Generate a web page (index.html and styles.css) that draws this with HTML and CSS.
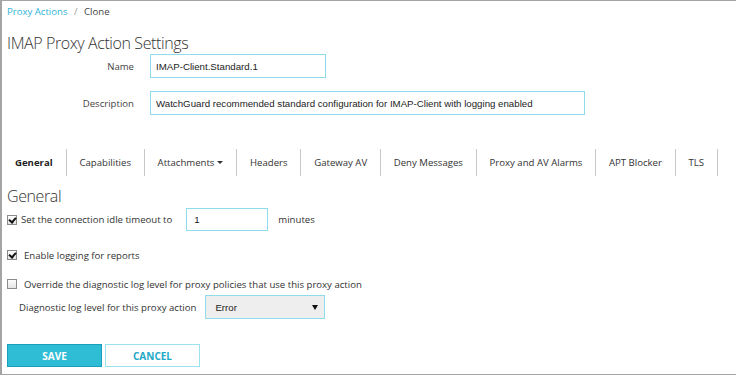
FILE: index.html
```html
<!DOCTYPE html>
<html>
<head>
    <title>IMAP Proxy Action Settings</title>
    <link rel="stylesheet" href="styles.css">
</head>
<body>
    <div class="frame">
        <div class="crumbs">
            <a href="#" class="crumb-link">Proxy Actions</a>
            <span class="crumb-sep">/</span>
            <span class="crumb-current">Clone</span>
        </div>

        <h1 class="page-title">IMAP Proxy Action Settings</h1>

        <div class="field field-name">
            <label class="field-label" for="name">Name</label>
            <input type="text" id="name" class="text-input input-name" value="IMAP-Client.Standard.1">
        </div>
        <div class="field field-desc">
            <label class="field-label" for="desc">Description</label>
            <input type="text" id="desc" class="text-input input-desc" value="WatchGuard recommended standard configuration for IMAP-Client with logging enabled">
        </div>

        <ul class="tabs">
            <li class="tab tab-active">General</li>
            <li class="tab">Capabilities</li>
            <li class="tab">Attachments<span class="caret"></span></li>
            <li class="tab">Headers</li>
            <li class="tab">Gateway AV</li>
            <li class="tab">Deny Messages</li>
            <li class="tab">Proxy and AV Alarms</li>
            <li class="tab">APT Blocker</li>
            <li class="tab">TLS</li>
        </ul>

        <h2 class="section-title">General</h2>

        <div class="row row-timeout">
            <span class="check checked"></span>
            <span class="row-text">Set the connection idle timeout to</span>
            <input type="text" class="text-input input-timeout" value="1">
            <span class="row-text">minutes</span>
        </div>

        <div class="row row-logging">
            <span class="check checked"></span>
            <span class="row-text">Enable logging for reports</span>
        </div>

        <div class="row row-override">
            <span class="check"></span>
            <span class="row-text">Override the diagnostic log level for proxy policies that use this proxy action</span>
        </div>

        <div class="row row-level">
            <span class="row-text">Diagnostic log level for this proxy action</span>
            <div class="select">
                <span>Error</span>
                <svg class="select-arrow" width="6" height="5" viewBox="0 0 6 5"><path d="M0 0h6L3 5z" fill="#111"/></svg>
            </div>
        </div>

        <div class="actions">
            <button class="btn btn-save">SAVE</button>
            <button class="btn btn-cancel">CANCEL</button>
        </div>
    </div>
</body>
</html>
```

FILE: styles.css
```css
body {
    margin: 0;
    background: #fff;
    font-family: "Open Sans", Arial, sans-serif;
    color: #333;
}

.frame {
    width: 733px;
    height: 373px;
    border: 1px solid #a4a4a4;
    border-left-width: 2px;
    padding-left: 5px;
    overflow: hidden;
}

/* breadcrumb */
.crumbs {
    padding-top: 3px;
    height: 16px;
    line-height: 16px;
    font-size: 9.6px;
}

.crumb-link {
    color: #2fb4d4;
    text-decoration: none;
}

.crumb-sep {
    color: #999;
    margin: 0 4px;
}

.crumb-current {
    color: #444;
}

.page-title {
    margin: 12px 0 0;
    font-size: 16px;
    letter-spacing: -0.4px;
    line-height: 22px;
    font-weight: 300;
    color: #333;
}

/* name / description */
.field {
    display: flex;
    align-items: center;
    gap: 16px;
}

.field-desc {
    margin-top: 13px;
}

.field-label {
    width: 127px;
    text-align: right;
    font-size: 9.6px;
    color: #444;
}

.text-input {
    box-sizing: border-box;
    height: 24px;
    border: 1px solid #8fdcec;
    padding: 0 5px;
    font-family: "Liberation Sans", Arial, sans-serif;
    font-size: 9.7px;
    color: #222;
    outline: none;
}

.input-name {
    width: 176px;
}

.input-desc {
    width: 435px;
}

/* tabs */
.tabs {
    list-style: none;
    margin: 34px 0 0 -5px;
    padding: 0;
    display: flex;
    height: 27px;
}

.tab {
    flex: none;
    white-space: nowrap;
    display: flex;
    align-items: center;
    padding: 0 12.8px;
    border-right: 1px solid #c8c8c8;
    font-size: 9.6px;
    color: #333;
}

.tab-active {
    padding-left: 13px;
    padding-right: 13px;
    font-weight: 700;
    color: #222;
}

.caret {
    display: inline-block;
    margin-left: 3px;
    border-left: 3px solid transparent;
    border-right: 3px solid transparent;
    border-top: 3px solid #333;
}

.section-title {
    margin: 9px 0 0;
    font-size: 16px;
    letter-spacing: -0.4px;
    line-height: 22px;
    font-weight: 300;
    color: #333;
}

/* checkbox rows */
.row {
    display: flex;
    align-items: center;
    font-size: 9.6px;
    color: #333;
}

.row-timeout {
    margin-top: 1px;
    gap: 4px;
}

.row-timeout .input-timeout {
    width: 82px;
    height: 23px;
    padding-left: 7px;
    margin: 0 6px 0 10px;
}

.row-logging {
    margin-top: 16px;
    height: 16px;
    gap: 7px;
}

.row-override {
    margin-top: 13px;
    height: 16px;
    gap: 7px;
}

.row-level {
    margin-top: 3px;
    padding-left: 12px;
    gap: 9px;
}

.check {
    box-sizing: border-box;
    width: 10px;
    height: 10px;
    border: 1px solid #8a8a8a;
    background: linear-gradient(#fdfdfd, #e4e4e4);
    position: relative;
    flex: none;
}

.check.checked::after {
    content: '';
    position: absolute;
    left: 2px;
    top: 0;
    width: 3px;
    height: 5px;
    border: solid #111;
    border-width: 0 2px 2px 0;
    transform: rotate(40deg);
}

.select {
    box-sizing: border-box;
    width: 120px;
    height: 24px;
    border: 1px solid #8fdcec;
    background: #eeeeee;
    display: flex;
    align-items: center;
    justify-content: space-between;
    padding: 0 6px 0 9px;
    font-family: "Liberation Sans", Arial, sans-serif;
    font-size: 9.7px;
    color: #222;
}

/* buttons */
.actions {
    margin-top: 25px;
    display: flex;
    gap: 3px;
}

.btn {
    box-sizing: border-box;
    width: 95px;
    height: 23px;
    font-family: "Open Sans", Arial, sans-serif;
    font-size: 10px;
    font-weight: 700;
    cursor: pointer;
}

.btn-save {
    background-color: #2fbdd5;
    border: 1px solid #1a9fbb;
    color: #fff;
}

.btn-cancel {
    background-color: #fff;
    border: 1px solid #9be2ef;
    color: #1ea9c6;
}
```
